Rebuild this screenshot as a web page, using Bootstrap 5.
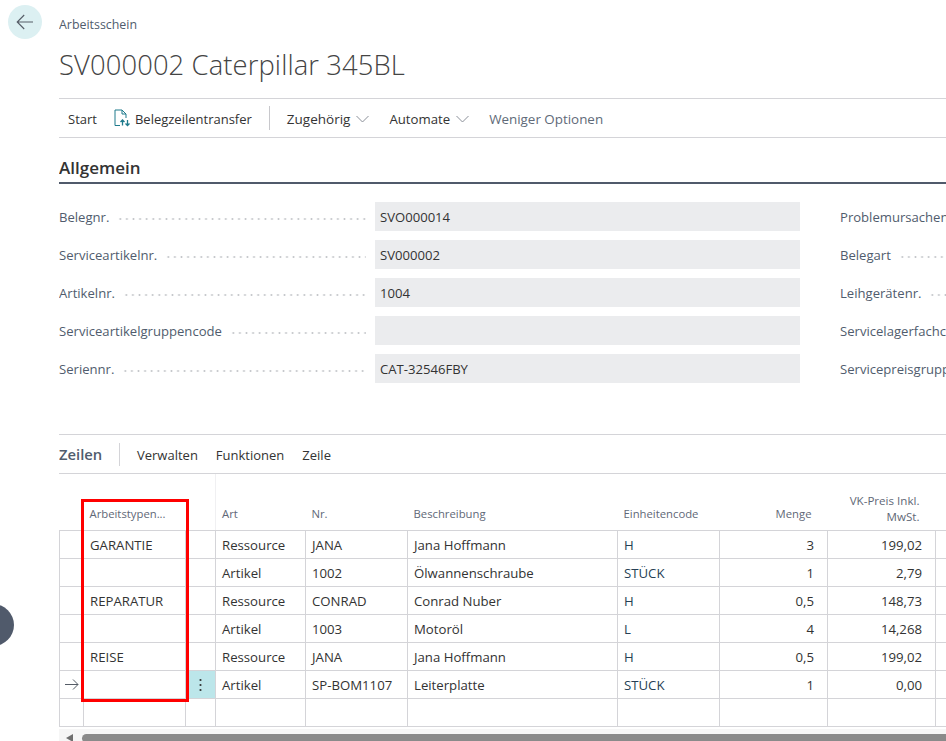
<!DOCTYPE html>
<html lang="de"><head><meta charset="utf-8"><title>Arbeitsschein</title>
<link href="https://cdn.jsdelivr.net/npm/bootstrap@5.3.0/dist/css/bootstrap.min.css" rel="stylesheet">
<style>
html,body{height:741px;overflow:hidden;background:#fff}
body{font-family:"Open Sans","Noto Sans",sans-serif;font-size:13.1px;color:#333;position:relative;width:946px}
.back-btn{position:absolute;left:8px;top:5px;width:34px;height:34px;border-radius:50%;background:#dcf0f2;border:0;padding:0}
.side-dot{position:absolute;left:-28px;top:604px;width:42px;height:42px;border-radius:50%;background:#505a6b}
.page-wrap{margin-left:59px;width:887px;overflow:hidden}
.crumb{font-size:12.4px;color:#505c6d;height:17px;line-height:17px;margin-top:16px}
.doc-title{font-size:27.4px;font-weight:300;color:#444;line-height:38px;margin:13px 0 14px;letter-spacing:.1px}
.cmdbar{height:40px;border-top:1px solid #d4d4d8;border-bottom:1px solid #d4d4d8;padding-left:9px}
.cmd{font-size:13px;color:#333;white-space:nowrap;line-height:18px;padding-top:1px;height:19px}
.cmd-wide{font-size:13.5px}
.cmd-opt{font-size:13.4px}
.cmd-mid{font-size:13.2px}
.cmd-mute{color:#606a78}
.vsep{width:1px;height:24px;background:#c8c8cc;margin:0 17px}
.chev{margin:1px 0 0 6px}
.gap-l{margin-left:20px}
.sec-head{font-size:17px;font-weight:600;color:#333;line-height:22px;margin-top:19px;padding-bottom:3px;border-bottom:2px solid #505a6b;height:27px}
.fields{margin-top:18px;height:232px}
.frow{height:29px;margin-bottom:9px;width:1100px}
.lbl{width:316px;color:#505c6d;white-space:nowrap;flex:none;padding-top:2px}
.lbl2{margin-left:40px}
.leader{flex:1;height:2px;margin:3px 9px 0 8px;background-image:radial-gradient(circle,#c4c6ca 1px,transparent 1.1px);background-size:6.6px 2px}
.val{width:425px;height:29px;background:#ebecee;padding-left:5px;line-height:30px;color:#333;flex:none}
.lines-bar{height:40px;border-top:1px solid #d4d4d8;border-bottom:1px solid #d4d4d8}
.lines-title{font-size:14.8px;font-weight:600;color:#505c6d;width:60px}
.lines-sep{width:1px;height:23px;background:#d4d4d8;margin-right:17px}
.lines-bar .cmd{margin-right:18px}
.tbl-area{position:relative;height:255px;overflow:hidden}
.grid{table-layout:fixed;border-collapse:collapse;width:887px;margin:0}
.grid th{height:56px;font-weight:400;font-size:11.3px;color:#5f6877;vertical-align:bottom;padding:0 5px 8px 6px;line-height:16px;border-bottom:1px solid #d4d4d8;overflow:hidden;white-space:nowrap}
.grid td{height:28px;padding:2px 5px 0 6px;border:1px solid #d4d4d8;font-size:13.2px;color:#333;white-space:nowrap;overflow:hidden;line-height:25px}
.grid tr>*:last-child{border-right:0}
.grid th.num{padding-right:16px}
.grid td.num{padding-right:13px}
.grid th.wrap{white-space:normal;padding-left:6px;padding-bottom:5px;font-size:11.6px}
.num{text-align:right}
.code{color:#263f55!important}
.pin{border-right:1px solid #f0f0f2}
.grid td.dots-cell{background:#bce6ea;text-align:center;padding:0}
.grid td.arrow-cell{padding:0;text-align:center}
.redbox{position:absolute;left:22px;top:25px;width:108px;height:203px;border:3px solid #f00;pointer-events:none}
.scrollwrap{height:15px;display:flex;align-items:center;background:#f6f6f6;padding-top:3px}
.arrow{width:0;height:0;border:4px solid transparent;border-right:7px solid #6f6f6f;border-left:0;margin:0 9px 0 7px}
.thumb{flex:1;height:9px;background:#8a8a8a;border-radius:5px 0 0 5px}
</style></head>
<body>
<button class="back-btn d-flex align-items-center justify-content-center" aria-label="Zurück">
<svg width="18" height="16" viewBox="0 0 18 16" fill="none" stroke="#555c66" stroke-width="1.1"><path d="M17 8H1.2M8.2 1 1.2 8l7 7"/></svg></button>
<div class="side-dot"></div>
<main class="page-wrap">
<div class="crumb">Arbeitsschein</div>
<h1 class="doc-title">SV000002 Caterpillar 345BL</h1>
<div class="cmdbar d-flex align-items-center">
<span class="cmd" style="margin-right:17px">Start</span>
<svg style="margin-right:4px" width="17" height="18" viewBox="0 0 17 18" fill="none" stroke="#1f7a8c" stroke-width="1"><path d="M6 16.500H1V1h7l4 4v4M8 1v4h4"/><path d="M8.500 16.500V11M6.500 13 8.500 11l2 2M13.500 11v5.500M11.500 14.500l2 2 2-2" stroke-width="1.300"/></svg>
<span class="cmd">Belegzeilentransfer</span>
<span class="vsep"></span>
<span class="cmd cmd-wide">Zugehörig</span>
<svg class="chev" width="13" height="8" viewBox="0 0 13 8" fill="none" stroke="#8a8f98"><path d="M.500 1l6 6 6-6"/></svg>
<span class="cmd cmd-mid gap-l">Automate</span>
<svg class="chev" width="13" height="8" viewBox="0 0 13 8" fill="none" stroke="#8a8f98"><path d="M.500 1l6 6 6-6"/></svg>
<span class="cmd cmd-opt cmd-mute gap-l">Weniger Optionen</span>
</div>
<h2 class="sec-head">Allgemein</h2>
<section class="fields">
<div class="frow d-flex align-items-center"><div class="lbl d-flex align-items-center"><span>Belegnr.</span><i class="leader"></i></div><div class="val">SVO000014</div><div class="lbl lbl2 d-flex align-items-center"><span>Problemursachencode</span><i class="leader"></i></div></div>
<div class="frow d-flex align-items-center"><div class="lbl d-flex align-items-center"><span>Serviceartikelnr.</span><i class="leader"></i></div><div class="val">SV000002</div><div class="lbl lbl2 d-flex align-items-center"><span>Belegart</span><i class="leader"></i></div></div>
<div class="frow d-flex align-items-center"><div class="lbl d-flex align-items-center"><span>Artikelnr.</span><i class="leader"></i></div><div class="val">1004</div><div class="lbl lbl2 d-flex align-items-center"><span>Leihgerätenr.</span><i class="leader"></i></div></div>
<div class="frow d-flex align-items-center"><div class="lbl d-flex align-items-center"><span>Serviceartikelgruppencode</span><i class="leader"></i></div><div class="val"></div><div class="lbl lbl2 d-flex align-items-center"><span>Servicelagerfachcode</span><i class="leader"></i></div></div>
<div class="frow d-flex align-items-center"><div class="lbl d-flex align-items-center"><span>Seriennr.</span><i class="leader"></i></div><div class="val">CAT-32546FBY</div><div class="lbl lbl2 d-flex align-items-center"><span>Servicepreisgruppencode</span><i class="leader"></i></div></div>
</section>
<div class="lines-bar d-flex align-items-center">
<span class="lines-title">Zeilen</span><span class="lines-sep"></span>
<span class="cmd">Verwalten</span><span class="cmd">Funktionen</span><span class="cmd">Zeile</span>
</div>
<div class="tbl-area">
<table class="grid">
<colgroup><col style="width:24px"><col style="width:102px"><col style="width:30px"><col style="width:90px"><col style="width:102px"><col style="width:210px"><col style="width:102px"><col style="width:108px"><col style="width:108px"><col style="width:11px"></colgroup>
<thead><tr><th></th><th>Arbeitstypen...</th><th class="pin"></th><th>Art</th><th>Nr.</th><th>Beschreibung</th><th>Einheitencode</th><th class="num">Menge</th><th class="num wrap">VK-Preis Inkl. MwSt.</th><th></th></tr></thead>
<tbody>
<tr><td></td><td>GARANTIE</td><td></td><td>Ressource</td><td>JANA</td><td>Jana Hoffmann</td><td class="code">H</td><td class="num">3</td><td class="num">199,02</td><td></td></tr>
<tr><td></td><td></td><td></td><td>Artikel</td><td>1002</td><td>Ölwannenschraube</td><td class="code">STÜCK</td><td class="num">1</td><td class="num">2,79</td><td></td></tr>
<tr><td></td><td>REPARATUR</td><td></td><td>Ressource</td><td>CONRAD</td><td>Conrad Nuber</td><td class="code">H</td><td class="num">0,5</td><td class="num">148,73</td><td></td></tr>
<tr><td></td><td></td><td></td><td>Artikel</td><td>1003</td><td>Motoröl</td><td class="code">L</td><td class="num">4</td><td class="num">14,268</td><td></td></tr>
<tr><td></td><td>REISE</td><td></td><td>Ressource</td><td>JANA</td><td>Jana Hoffmann</td><td class="code">H</td><td class="num">0,5</td><td class="num">199,02</td><td></td></tr>
<tr><td class="arrow-cell"><svg width="14" height="11" viewBox="0 0 14 11" fill="none" stroke="#555c66"><path d="M0 5.500h13M8 .5l5 5-5 5"/></svg></td><td></td><td class="dots-cell"><svg width="3" height="14" viewBox="0 0 3 14" fill="#333"><circle cx="1.500" cy="2" r="1.100"/><circle cx="1.500" cy="7" r="1.100"/><circle cx="1.500" cy="12" r="1.100"/></svg></td><td>Artikel</td><td>SP-BOM1107</td><td>Leiterplatte</td><td class="code">STÜCK</td><td class="num">1</td><td class="num">0,00</td><td></td></tr>
<tr><td></td><td></td><td></td><td></td><td></td><td></td><td></td><td></td><td></td><td></td></tr>
</tbody></table>
<div class="redbox"></div>
</div>
<div class="scrollwrap"><span class="arrow"></span><span class="thumb"></span></div>
</main>
</body></html>
